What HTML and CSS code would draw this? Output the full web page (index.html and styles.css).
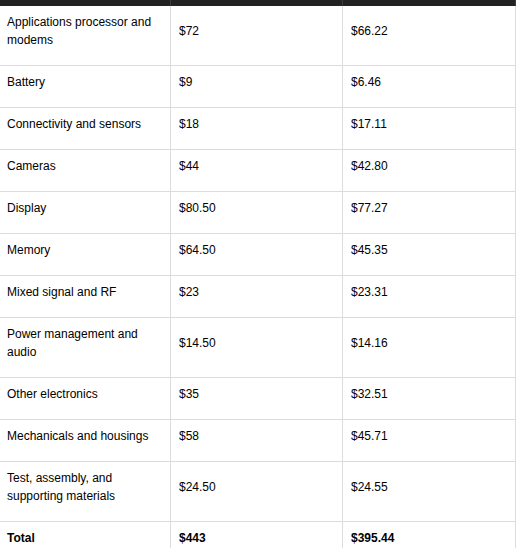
FILE: index.html
```html
<!DOCTYPE html>
<html>
<head>
<meta charset="utf-8">
<link rel="stylesheet" href="styles.css">
</head>
<body>
<table class="cost-table">
  <thead>
    <tr class="head-row"><th class="c1"></th><th class="c2"></th><th class="c3"></th></tr>
  </thead>
  <tbody>
    <tr><td>Applications processor and modems</td><td>$72</td><td>$66.22</td></tr>
    <tr><td>Battery</td><td>$9</td><td>$6.46</td></tr>
    <tr><td>Connectivity and sensors</td><td>$18</td><td>$17.11</td></tr>
    <tr><td>Cameras</td><td>$44</td><td>$42.80</td></tr>
    <tr><td>Display</td><td>$80.50</td><td>$77.27</td></tr>
    <tr><td>Memory</td><td>$64.50</td><td>$45.35</td></tr>
    <tr><td>Mixed signal and RF</td><td>$23</td><td>$23.31</td></tr>
    <tr><td>Power management and audio</td><td>$14.50</td><td>$14.16</td></tr>
    <tr><td>Other electronics</td><td>$35</td><td>$32.51</td></tr>
    <tr><td>Mechanicals and housings</td><td>$58</td><td>$45.71</td></tr>
    <tr><td>Test, assembly, and supporting materials</td><td>$24.50</td><td>$24.55</td></tr>
    <tr class="total"><td>Total</td><td>$443</td><td>$395.44</td></tr>
  </tbody>
</table>
</body>
</html>
```
FILE: styles.css
```css
html, body {
  margin: 0;
  padding: 0;
  background: #fff;
}
.cost-table {
  border-collapse: separate;
  border-spacing: 0;
  table-layout: fixed;
  width: 516px;
  font-family: "Liberation Sans", Arial, sans-serif;
  font-size: 12px;
  line-height: 18px;
  color: #000;
}
.cost-table th,
.cost-table td {
  box-sizing: border-box;
}
.head-row th {
  height: 6px;
  padding: 0;
  background: #222;
  border-right: 1px solid #3c3c3c;
}
.c1 { width: 171px; }
.c2 { width: 172px; }
.c3 { width: 173px; }
.cost-table td {
  padding: 7px 8px 16px 8px;
  border-right: 1px solid #dcdcdc;
  border-bottom: 1px solid #dcdcdc;
  vertical-align: middle;
  text-align: left;
}
.cost-table td:first-child {
  padding-left: 7px;
}
.total td {
  font-weight: bold;
}
```
